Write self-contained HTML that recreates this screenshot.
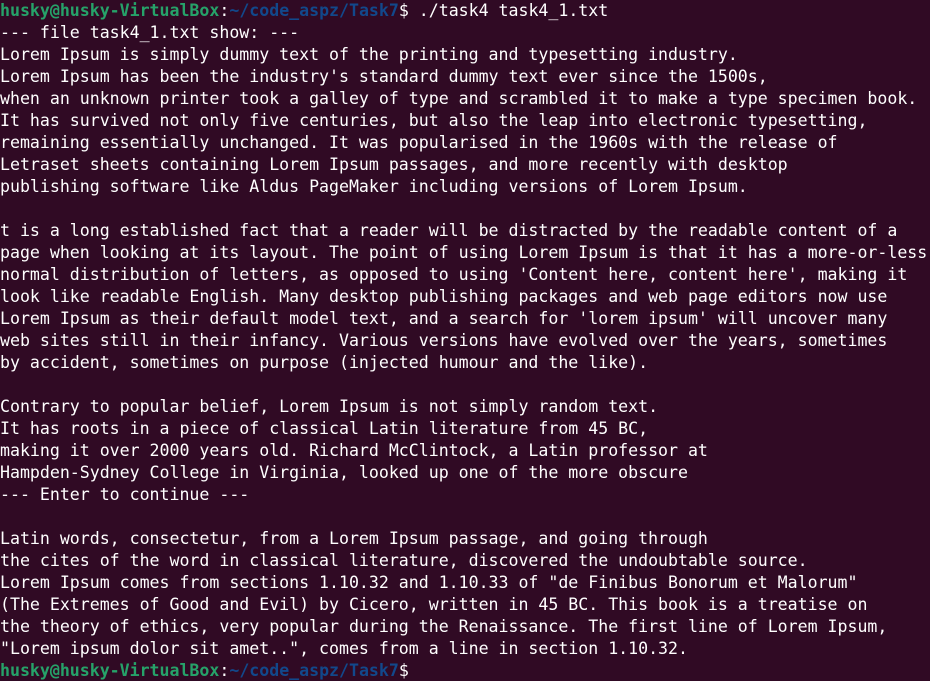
<!DOCTYPE html>
<html><head><meta charset="utf-8"><style>
html,body{margin:0;padding:0;background:#300a24;width:930px;height:681px;overflow:hidden}
pre{margin:0;padding:0 0 0 0;font-family:"DejaVu Sans Mono","Liberation Mono",monospace;font-size:16.6px;line-height:22px;color:#ffffff;white-space:pre;letter-spacing:-0.02px}
.g{color:#26a269;font-weight:bold}.b{color:#12488b;font-weight:bold}
</style></head><body><pre><span class="g">husky@husky-VirtualBox</span>:<span class="b">~/code_aspz/Task7</span>$ ./task4 task4_1.txt
--- file task4_1.txt show: ---
Lorem Ipsum is simply dummy text of the printing and typesetting industry.
Lorem Ipsum has been the industry's standard dummy text ever since the 1500s,
when an unknown printer took a galley of type and scrambled it to make a type specimen book.
It has survived not only five centuries, but also the leap into electronic typesetting,
remaining essentially unchanged. It was popularised in the 1960s with the release of
Letraset sheets containing Lorem Ipsum passages, and more recently with desktop
publishing software like Aldus PageMaker including versions of Lorem Ipsum.

t is a long established fact that a reader will be distracted by the readable content of a
page when looking at its layout. The point of using Lorem Ipsum is that it has a more-or-less
normal distribution of letters, as opposed to using 'Content here, content here', making it
look like readable English. Many desktop publishing packages and web page editors now use
Lorem Ipsum as their default model text, and a search for 'lorem ipsum' will uncover many
web sites still in their infancy. Various versions have evolved over the years, sometimes
by accident, sometimes on purpose (injected humour and the like).

Contrary to popular belief, Lorem Ipsum is not simply random text.
It has roots in a piece of classical Latin literature from 45 BC,
making it over 2000 years old. Richard McClintock, a Latin professor at
Hampden-Sydney College in Virginia, looked up one of the more obscure
--- Enter to continue ---

Latin words, consectetur, from a Lorem Ipsum passage, and going through
the cites of the word in classical literature, discovered the undoubtable source.
Lorem Ipsum comes from sections 1.10.32 and 1.10.33 of "de Finibus Bonorum et Malorum"
(The Extremes of Good and Evil) by Cicero, written in 45 BC. This book is a treatise on
the theory of ethics, very popular during the Renaissance. The first line of Lorem Ipsum,
"Lorem ipsum dolor sit amet..", comes from a line in section 1.10.32.
<span class="g">husky@husky-VirtualBox</span>:<span class="b">~/code_aspz/Task7</span>$ </pre></body></html>
